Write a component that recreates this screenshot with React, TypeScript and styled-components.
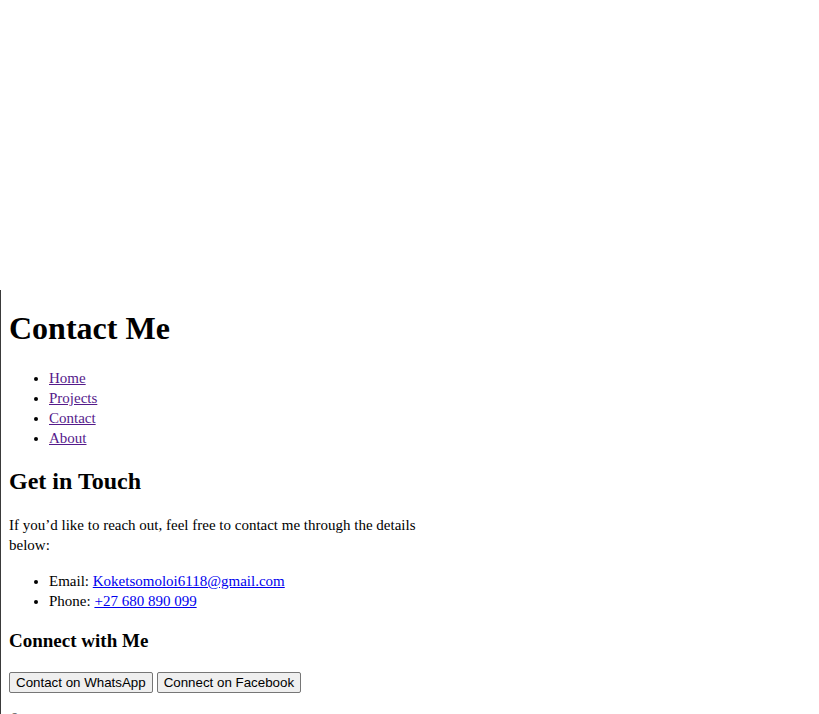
import { FunctionComponent } from 'react'
import styled, { createGlobalStyle } from 'styled-components'

const GlobalStyle = createGlobalStyle`
  html, body {
    margin: 0;
    padding: 0;
    background: #fff;
  }
  body {
    font-family: "Liberation Serif", "Times New Roman", serif;
    font-size: 15px;
    line-height: 20px;
    color: #000;
  }
`

const Banner = styled.div`
  height: 290px;
  background: #fff;
`

const Main = styled.main`
  display: flow-root;
  border-left: 1px solid #3a3a3a;
  padding: 0 0 40px 8px;
  width: 420px;
`

const Title = styled.h1`
  font-size: 32px;
  line-height: 37px;
  font-weight: bold;
  margin: 20px 0 21px;
`

const Heading = styled.h2`
  font-size: 24px;
  line-height: 28px;
  font-weight: bold;
  margin: 19px 0 20px;
`

const SubHeading = styled.h3`
  font-size: 19px;
  line-height: 22px;
  font-weight: bold;
  margin: 19px 0 20px;
`

const List = styled.ul`
  margin: 16px 0;
  padding-left: 40px;
  list-style: disc;
`

const NavLink = styled.a<{ $visited?: boolean }>`
  color: ${p => (p.$visited ? '#551a8b' : '#0000ee')};
  text-decoration: underline;
`

const Text = styled.p`
  margin: 16px 0 15px;
`

const ButtonRow = styled.div`
  display: flex;
  gap: 4px;
  margin: 16px 0;
`

const Button = styled.button`
  font-family: "Liberation Sans", Arial, sans-serif;
  font-size: 13.333px;
  line-height: 15px;
  color: #000;
  background: #efefef;
  border: 1px solid #767676;
  border-radius: 2px;
  padding: 2px 6px;
`

const navItems = ['Home', 'Projects', 'Contact', 'About']

const App: FunctionComponent = () => {
  return (
    <>
      <GlobalStyle />
      <Banner />
      <Main>
        <Title>Contact Me</Title>
        <List>
          {navItems.map(item => (
            <li key={item}>
              <NavLink $visited href="#">{item}</NavLink>
            </li>
          ))}
        </List>
        <Heading>Get in Touch</Heading>
        <Text>
          If you’d like to reach out, feel free to contact me through the details below:
        </Text>
        <List>
          <li>
            Email: <NavLink href="#">Koketsomoloi6118@gmail.com</NavLink>
          </li>
          <li>
            Phone: <NavLink href="#">+27 680 890 099</NavLink>
          </li>
        </List>
        <SubHeading>Connect with Me</SubHeading>
        <ButtonRow>
          <Button>Contact on WhatsApp</Button>
          <Button>Connect on Facebook</Button>
        </ButtonRow>
        <Text>© 2024 My Website</Text>
      </Main>
    </>
  )
}

export default App
